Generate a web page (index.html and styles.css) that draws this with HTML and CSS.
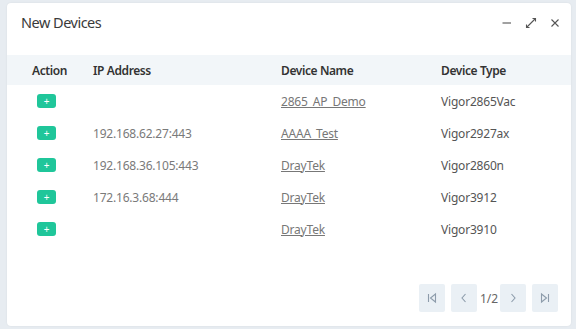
FILE: index.html
```html
<!DOCTYPE html>
<html lang="en">
<head>
    <meta charset="UTF-8">
    <meta name="viewport" content="width=device-width, initial-scale=1.0">
    <title>New Devices</title>
    <link rel="stylesheet" href="styles.css">
</head>
<body>
    <div class="panel">
        <div class="panel-head">
            <h1 class="panel-title">New Devices</h1>
            <div class="panel-tools">
                <button class="tool" title="Minimize">
                    <svg width="16" height="16" viewBox="0 0 16 16"><path d="M3.5 8h8.5" /></svg>
                </button>
                <button class="tool" title="Maximize">
                    <svg width="16" height="16" viewBox="0 0 16 16"><path d="M3.5 12.5l9-9M9.5 3.5h3v3M3.5 9.5v3h3" /></svg>
                </button>
                <button class="tool" title="Close">
                    <svg width="16" height="16" viewBox="0 0 16 16"><path d="M4.5 4.5l7 7M11.5 4.5l-7 7" /></svg>
                </button>
            </div>
        </div>

        <div class="device-table">
            <div class="table-row table-header">
                <span>Action</span>
                <span>IP Address</span>
                <span>Device Name</span>
                <span>Device Type</span>
            </div>
            <div class="table-row">
                <span><button class="add-button">+</button></span>
                <span class="ip"></span>
                <span><a href="#" class="device-link">2865_AP_Demo</a></span>
                <span class="type">Vigor2865Vac</span>
            </div>
            <div class="table-row">
                <span><button class="add-button">+</button></span>
                <span class="ip">192.168.62.27:443</span>
                <span><a href="#" class="device-link">AAAA_Test</a></span>
                <span class="type">Vigor2927ax</span>
            </div>
            <div class="table-row">
                <span><button class="add-button">+</button></span>
                <span class="ip">192.168.36.105:443</span>
                <span><a href="#" class="device-link">DrayTek</a></span>
                <span class="type">Vigor2860n</span>
            </div>
            <div class="table-row">
                <span><button class="add-button">+</button></span>
                <span class="ip">172.16.3.68:444</span>
                <span><a href="#" class="device-link">DrayTek</a></span>
                <span class="type">Vigor3912</span>
            </div>
            <div class="table-row">
                <span><button class="add-button">+</button></span>
                <span class="ip"></span>
                <span><a href="#" class="device-link">DrayTek</a></span>
                <span class="type">Vigor3910</span>
            </div>
        </div>

        <div class="pager">
            <button class="page-button" title="First">
                <svg width="12" height="12" viewBox="0 0 12 12"><path d="M2.5 2v8M9.5 2L4.5 6l5 4z" /></svg>
            </button>
            <button class="page-button" title="Previous">
                <svg width="12" height="12" viewBox="0 0 12 12"><path d="M7.5 2L4 6l3.5 4" /></svg>
            </button>
            <span class="page-info">1/2</span>
            <button class="page-button" title="Next">
                <svg width="12" height="12" viewBox="0 0 12 12"><path d="M4.5 2L8 6l-3.5 4" /></svg>
            </button>
            <button class="page-button" title="Last">
                <svg width="12" height="12" viewBox="0 0 12 12"><path d="M9.5 2v8M2.5 2l5 4-5 4z" /></svg>
            </button>
        </div>
    </div>
</body>
</html>
```

FILE: styles.css
```css
/* styles.css */
body {
    font-family: "Noto Sans", "Open Sans", sans-serif;
    background-color: #e7ecf1;
    margin: 0;
    padding: 3px 5px 3px 7px;
}

.panel {
    background-color: #fff;
    border-radius: 4px;
    box-shadow: 0 0 2px rgba(0,0,0,0.08);
    height: 323px;
    box-sizing: border-box;
    display: flex;
    flex-direction: column;
}

.panel-head {
    height: 52px;
    display: flex;
    justify-content: space-between;
    align-items: flex-start;
    padding: 9px 8px 0 14px;
    box-sizing: border-box;
}

.panel-title {
    margin: 0;
    font-size: 14.5px;
    font-weight: normal;
    letter-spacing: -0.5px;
    line-height: 20px;
    color: #3a3a3a;
}

.panel-tools {
    display: flex;
    gap: 8px;
    padding-top: 3px;
}

.tool {
    width: 16px;
    height: 16px;
    padding: 0;
    border: none;
    background: none;
    cursor: pointer;
}

.tool svg {
    display: block;
    fill: none;
    stroke: #555;
    stroke-width: 1.1;
}

.table-row {
    display: grid;
    grid-template-columns: 61px 188px 160px 1fr;
    align-items: center;
    height: 32px;
    padding-left: 25px;
    font-size: 12px;
    letter-spacing: -0.2px;
}

.table-header {
    height: 30px;
    background-color: #f2f6f9;
    font-weight: 600;
    letter-spacing: -0.4px;
    color: #333;
}

.add-button {
    display: block;
    width: 19px;
    height: 14px;
    margin-left: 5px;
    padding: 0;
    border: none;
    border-radius: 3px;
    background-color: #1fc69a;
    color: #fff;
    font-size: 10px;
    line-height: 14px;
    font-family: inherit;
    cursor: pointer;
}

.ip {
    color: #7a7a7a;
}

.device-link {
    color: #777;
    text-decoration: underline;
}

.type {
    color: #555;
}

.pager {
    margin-top: auto;
    display: flex;
    justify-content: flex-end;
    align-items: center;
    gap: 6px;
    padding: 0 13px 14px 0;
}

.page-button {
    width: 26px;
    height: 28px;
    padding: 0;
    border: none;
    border-radius: 2px;
    background-color: #eaf0f5;
    display: flex;
    align-items: center;
    justify-content: center;
    cursor: pointer;
}

.page-button svg {
    fill: none;
    stroke: #8d9cab;
    stroke-width: 1.1;
}

.page-info {
    font-size: 12px;
    color: #666;
    width: 17px;
    margin: 0 -3px;
    text-align: center;
}
```
